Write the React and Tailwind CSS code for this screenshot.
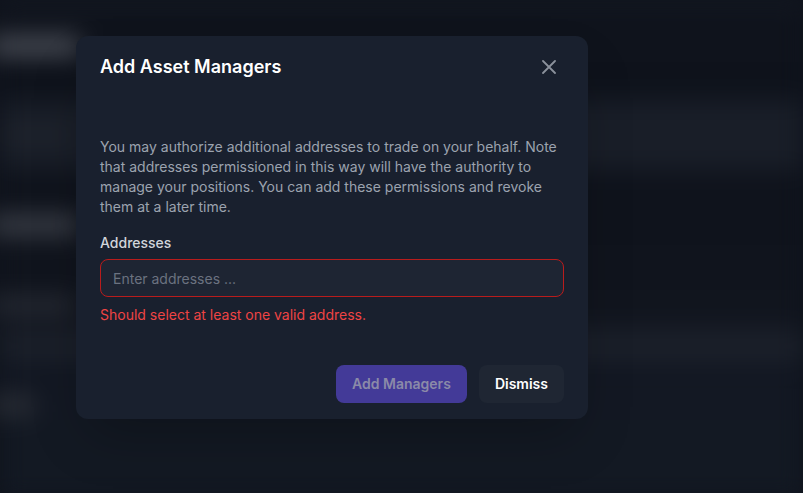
import React from "react";

const Backdrop = () => {
  return (
    <div className="absolute inset-0 blur-md">
      <div className="h-[8px] bg-[#161b25]"></div>
      <div className="h-[22px] bg-[#0f131c]"></div>
      <div className="flex h-[32px] items-center bg-[#0f131c]">
        <div className="ml-[-10px] h-[18px] w-[90px] rounded bg-[#50545d]"></div>
      </div>
      <div className="h-[38px] bg-[#0e121b]"></div>
      <div className="flex h-[70px] items-center bg-[#191e28]">
        <div className="h-[12px] w-[70px] rounded bg-[#22262f]"></div>
      </div>
      <div className="h-[35px] bg-[#0f131c]"></div>
      <div className="flex h-[40px] items-center bg-[#0f131c]">
        <div className="ml-[-10px] h-[20px] w-[90px] rounded bg-[#3c4049]"></div>
      </div>
      <div className="h-[45px] bg-[#10141d]"></div>
      <div className="flex h-[30px] items-center bg-[#11151e]">
        <div className="ml-[-10px] h-[14px] w-[85px] rounded bg-[#2c3039]"></div>
      </div>
      <div className="h-[10px] bg-[#121620]"></div>
      <div className="h-[32px] bg-[#1b202a]"></div>
      <div className="h-[28px] bg-[#121722]"></div>
      <div className="flex h-[30px] items-center bg-[#131823]">
        <div className="ml-[-10px] h-[20px] w-[45px] rounded bg-[#2a2e36]"></div>
      </div>
      <div className="h-[80px] bg-[#131923]"></div>
    </div>
  );
};

const App = () => {
  return (
    <div className="relative h-[493px] w-full overflow-hidden bg-[#0f131c] font-['Inter',sans-serif]">
      <Backdrop />
      <div className="absolute inset-0 pl-[76px] pt-[36px]">
        <div className="w-[512px] rounded-xl bg-[#19202e] px-6 pb-4 pt-[17px] shadow-2xl">
          <div className="flex items-center justify-between">
            <h2 className="text-lg font-semibold leading-7 text-white">Add Asset Managers</h2>
            <button className="mr-2 text-[#8b919c]">
              <svg width="14" height="14" viewBox="0 0 14 14" fill="none" stroke="currentColor" strokeWidth="1.8" strokeLinecap="round">
                <path d="M1 1l12 12M13 1L1 13" />
              </svg>
            </button>
          </div>

          <p className="mt-[56px] text-sm leading-5 text-[#9ca3af]">
            You may authorize additional addresses to trade on your behalf. Note that addresses permissioned in this way
            will have the authority to manage your positions. You can add these permissions and revoke them at a later
            time.
          </p>

          <label className="mt-4 block text-sm font-medium leading-5 text-[#d1d5db]">Addresses</label>
          <input
            className="mt-1.5 block h-[38px] w-full rounded-lg border border-[#b91c1c] bg-[#1e2533] px-3 text-sm text-white outline-none placeholder:text-[#6b7280]"
            placeholder="Enter addresses ..."
          />
          <p className="mt-2 text-sm leading-5 text-[#ef4444]">Should select at least one valid address.</p>

          <div className="mt-10 flex justify-end gap-3">
            <button className="h-[38px] rounded-lg bg-[#433a98] px-4 text-sm font-semibold text-[#8b8aa8]">
              Add Managers
            </button>
            <button className="h-[38px] rounded-lg bg-[#1f2633] px-4 text-sm font-semibold text-white">Dismiss</button>
          </div>
        </div>
      </div>
    </div>
  );
};

export default App;
